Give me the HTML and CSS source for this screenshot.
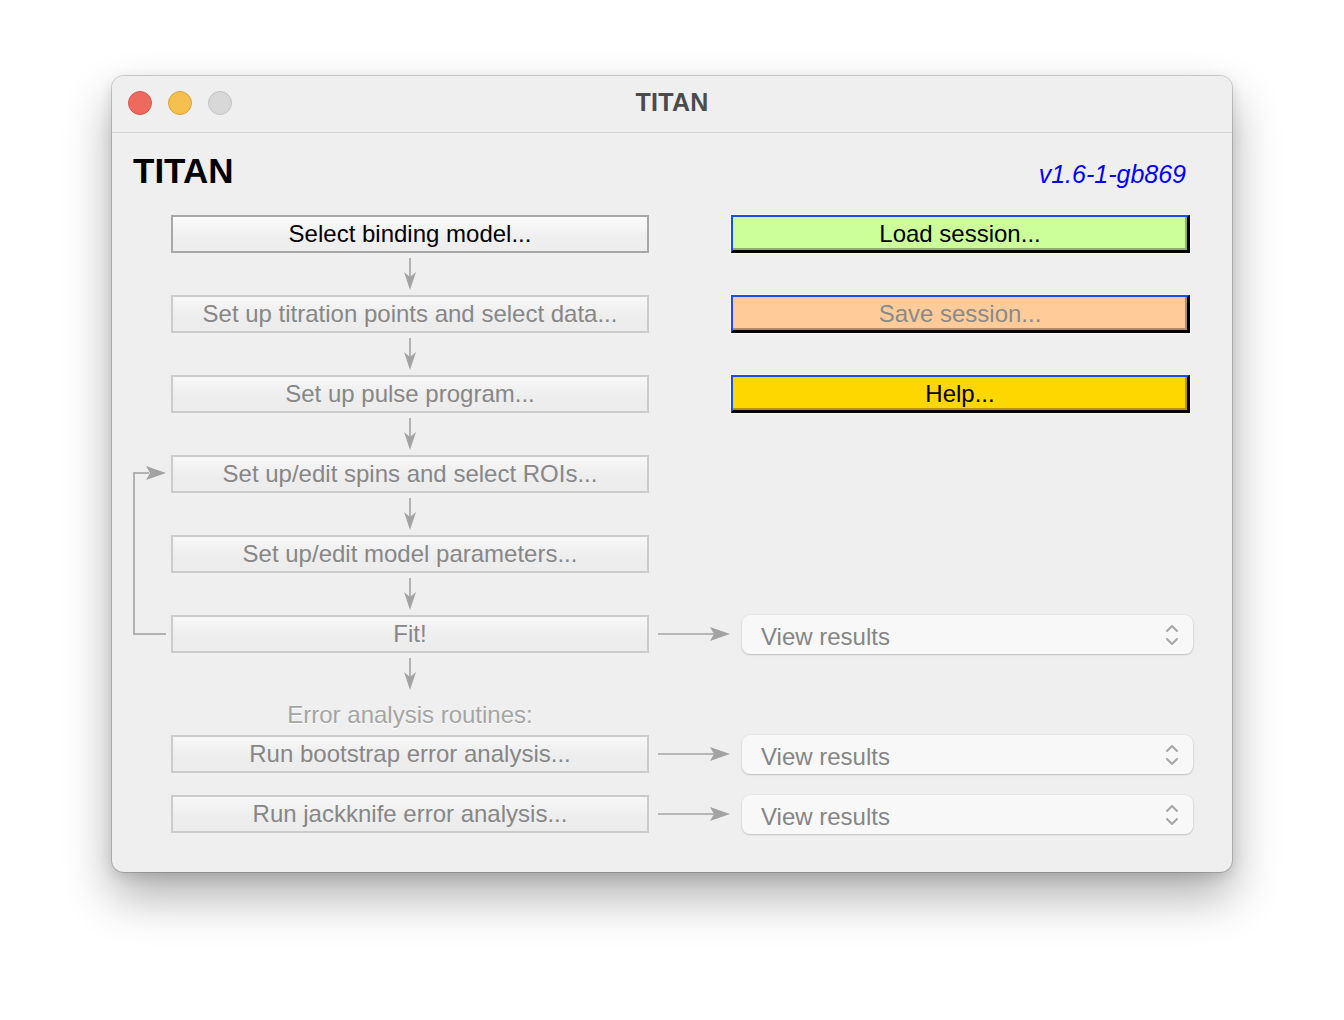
FILE: index.html
```html
<!DOCTYPE html>
<html lang="en">
<head>
<meta charset="utf-8">
<title>TITAN</title>
<link rel="stylesheet" href="styles.css">
</head>
<body>
<div class="window">
  <div class="titlebar">
    <div class="lights">
      <span class="light red"></span>
      <span class="light yellow"></span>
      <span class="light gray"></span>
    </div>
    <div class="title">TITAN</div>
    <div></div>
  </div>
  <div class="content">
    <div class="header">
      <h1 class="app-name">TITAN</h1>
      <span class="version">v1.6-1-gb869</span>
    </div>
    <div class="flow">
      <!-- row 1 -->
      <button class="btn active r1">Select binding model...</button>
      <button class="side-btn load r1">Load session...</button>
      <div class="varrow r2"><svg width="20" height="42" viewBox="0 0 20 42"><line x1="10" y1="5" x2="10" y2="30" class="ln"/><path d="M10 37 L4 19 L10 24 L16 19 Z" class="hd"/></svg></div>
      <!-- row 3 -->
      <button class="btn r3">Set up titration points and select data...</button>
      <button class="side-btn save r3">Save session...</button>
      <div class="varrow r4"><svg width="20" height="42" viewBox="0 0 20 42"><line x1="10" y1="5" x2="10" y2="30" class="ln"/><path d="M10 37 L4 19 L10 24 L16 19 Z" class="hd"/></svg></div>
      <!-- row 5 -->
      <button class="btn r5">Set up pulse program...</button>
      <button class="side-btn help r5">Help...</button>
      <div class="varrow r6"><svg width="20" height="42" viewBox="0 0 20 42"><line x1="10" y1="5" x2="10" y2="30" class="ln"/><path d="M10 37 L4 19 L10 24 L16 19 Z" class="hd"/></svg></div>
      <!-- loop -->
      <div class="loop">
        <svg class="loop-arrow" width="31" height="16" viewBox="0 0 31 16"><line x1="-2" y1="8" x2="14" y2="8" class="ln"/><path d="M31 8 L11 1 L15 8 L11 15 Z" class="hd"/></svg>
      </div>
      <!-- row 7 -->
      <button class="btn r7">Set up/edit spins and select ROIs...</button>
      <div class="varrow r8"><svg width="20" height="42" viewBox="0 0 20 42"><line x1="10" y1="5" x2="10" y2="30" class="ln"/><path d="M10 37 L4 19 L10 24 L16 19 Z" class="hd"/></svg></div>
      <!-- row 9 -->
      <button class="btn r9">Set up/edit model parameters...</button>
      <div class="varrow r10"><svg width="20" height="42" viewBox="0 0 20 42"><line x1="10" y1="5" x2="10" y2="30" class="ln"/><path d="M10 37 L4 19 L10 24 L16 19 Z" class="hd"/></svg></div>
      <!-- row 11 -->
      <button class="btn r11">Fit!</button>
      <div class="harrow r11"><svg width="93" height="20" viewBox="0 0 93 20"><line x1="9" y1="10" x2="66" y2="10" class="ln"/><path d="M81 10 L61 3 L65 10 L61 17 Z" class="hd"/></svg></div>
      <div class="select r11"><span>View results</span><svg class="chev" width="14" height="26" viewBox="0 0 14 26"><path d="M2 9 L7 4 L12 9" class="cv"/><path d="M2 17 L7 22 L12 17" class="cv"/></svg></div>
      <div class="varrow r12"><svg width="20" height="42" viewBox="0 0 20 42"><line x1="10" y1="5" x2="10" y2="30" class="ln"/><path d="M10 37 L4 19 L10 24 L16 19 Z" class="hd"/></svg></div>
      <!-- row 13 -->
      <div class="section-label r13">Error analysis routines:</div>
      <!-- row 14 -->
      <button class="btn r14">Run bootstrap error analysis...</button>
      <div class="harrow r14"><svg width="93" height="20" viewBox="0 0 93 20"><line x1="9" y1="10" x2="66" y2="10" class="ln"/><path d="M81 10 L61 3 L65 10 L61 17 Z" class="hd"/></svg></div>
      <div class="select r14"><span>View results</span><svg class="chev" width="14" height="26" viewBox="0 0 14 26"><path d="M2 9 L7 4 L12 9" class="cv"/><path d="M2 17 L7 22 L12 17" class="cv"/></svg></div>
      <!-- row 16 -->
      <button class="btn r16">Run jackknife error analysis...</button>
      <div class="harrow r16"><svg width="93" height="20" viewBox="0 0 93 20"><line x1="9" y1="10" x2="66" y2="10" class="ln"/><path d="M81 10 L61 3 L65 10 L61 17 Z" class="hd"/></svg></div>
      <div class="select r16"><span>View results</span><svg class="chev" width="14" height="26" viewBox="0 0 14 26"><path d="M2 9 L7 4 L12 9" class="cv"/><path d="M2 17 L7 22 L12 17" class="cv"/></svg></div>
    </div>
  </div>
</div>
</body>
</html>
```
FILE: styles.css
```css
html, body {
  margin: 0;
  padding: 0;
  background: #ffffff;
  font-family: "Liberation Sans", Arial, Helvetica, sans-serif;
}

body {
  width: 1344px;
  height: 1020px;
  overflow: hidden;
}

.window {
  margin: 76px 0 0 112px;
  width: 1120px;
  height: 796px;
  box-sizing: border-box;
  border-radius: 12px;
  background: #efefef;
  box-shadow: 0 0 0 1px rgba(0, 0, 0, 0.16), 0 24px 48px rgba(0, 0, 0, 0.32), 0 4px 14px rgba(0, 0, 0, 0.12);
  overflow: hidden;
  display: flex;
  flex-direction: column;
}

.titlebar {
  height: 57px;
  box-sizing: border-box;
  border-bottom: 1px solid #d2d2d2;
  background: #efefef;
  display: grid;
  grid-template-columns: 1fr auto 1fr;
  align-items: center;
}

.lights {
  display: flex;
  gap: 16px;
  padding-left: 16px;
  padding-bottom: 2px;
}

.light {
  width: 24px;
  height: 24px;
  box-sizing: border-box;
  border-radius: 50%;
  display: block;
}

.light.red { background: #ee6a5f; border: 1px solid #d5574c; }
.light.yellow { background: #f5c04f; border: 1px solid #d9a33e; }
.light.gray { background: #d8d8d8; border: 1px solid #c2c2c2; }

.title {
  font-size: 25px;
  font-weight: bold;
  color: #4b4b4b;
  padding-bottom: 3px;
  letter-spacing: 0.3px;
}

.content {
  padding: 18px 39px 0 21px;
}

.header {
  display: flex;
  justify-content: space-between;
  align-items: baseline;
  padding-right: 7px;
  height: 40px;
}

.app-name {
  margin: 0;
  font-size: 35px;
  line-height: 40px;
  font-weight: bold;
  color: #000;
}

.version {
  font-size: 25px;
  font-style: italic;
  color: #0000ff;
}

.flow {
  margin-top: 24px;
  display: grid;
  grid-template-columns: 38px 478px 93px 451px;
  grid-template-rows: 38px 42px 38px 42px 38px 42px 38px 42px 38px 42px 38px 42px 40px 38px 22px 38px;
}

.r1 { grid-row: 1; }
.r2 { grid-row: 2; }
.r3 { grid-row: 3; }
.r4 { grid-row: 4; }
.r5 { grid-row: 5; }
.r6 { grid-row: 6; }
.r7 { grid-row: 7; }
.r8 { grid-row: 8; }
.r9 { grid-row: 9; }
.r10 { grid-row: 10; }
.r11 { grid-row: 11; }
.r12 { grid-row: 12; }
.r13 { grid-row: 13; }
.r14 { grid-row: 14; }
.r16 { grid-row: 16; }

.btn {
  grid-column: 2;
  margin: 0;
  padding: 0;
  height: 38px;
  box-sizing: border-box;
  border: 2px solid #cbcbcb;
  border-radius: 0;
  background: linear-gradient(#f7f7f7, #ededed 60%, #ececec);
  color: #878787;
  font-family: "Liberation Sans", Arial, Helvetica, sans-serif;
  font-size: 24px;
  display: flex;
  align-items: center;
  justify-content: center;
  white-space: nowrap;
}

.btn.active {
  border-color: #a8a8a8;
  color: #000;
  background: linear-gradient(#fbfbfb, #efefef 60%, #ededed);
}

.side-btn {
  grid-column: 3 / 5;
  margin: 0 3px 0 82px;
  padding: 0;
  height: 38px;
  box-sizing: border-box;
  border-top: 2px solid #1a4fe6;
  border-left: 2px solid #1a4fe6;
  border-right: 3px solid #000;
  border-bottom: 3px solid #000;
  border-radius: 0;
  font-family: "Liberation Sans", Arial, Helvetica, sans-serif;
  font-size: 24px;
  color: #000;
  display: flex;
  align-items: center;
  justify-content: center;
  box-shadow: 0 0 0 1px rgba(255, 255, 255, 0.75);
}

.side-btn.load {
  background: #ccff99;
  box-shadow: inset -2px -2px 0 #8fae6a, 0 0 0 1px rgba(255, 255, 255, 0.75);
}

.side-btn.save {
  background: #ffcc99;
  color: #8a8a8a;
  box-shadow: inset -2px -2px 0 #b08d6a, 0 0 0 1px rgba(255, 255, 255, 0.75);
}

.side-btn.help {
  background: #ffd700;
  box-shadow: inset -2px -2px 0 #b39700, 0 0 0 1px rgba(255, 255, 255, 0.75);
}

.varrow {
  grid-column: 2;
  justify-self: center;
  display: flex;
}

.harrow {
  grid-column: 3;
  align-self: center;
  display: flex;
}

.ln {
  stroke: #a3a3a3;
  stroke-width: 1.6;
  fill: none;
}

.hd {
  fill: #a3a3a3;
  stroke: none;
}

.loop {
  grid-column: 1;
  grid-row: 7 / 12;
  margin: 18px 5px 18px 0;
  border-left: 2px solid #b2b2b2;
  border-bottom: 2px solid #b2b2b2;
  display: flex;
  flex-direction: column;
}

.loop-arrow {
  margin-top: -8px;
  overflow: visible;
}

.select {
  grid-column: 4;
  align-self: start;
  height: 39px;
  box-sizing: border-box;
  border-radius: 8px;
  background: #f8f8f8;
  box-shadow: 0 1px 2px rgba(0, 0, 0, 0.18), 0 0 0 0.5px rgba(0, 0, 0, 0.06);
  display: flex;
  align-items: center;
  justify-content: space-between;
  padding: 5px 14px 0 19px;
  font-size: 24px;
  color: #858585;
}

.chev {
  margin-top: -5px;
}

.cv {
  stroke: #a6a6a6;
  stroke-width: 2;
  fill: none;
  stroke-linecap: round;
  stroke-linejoin: round;
}

.section-label {
  grid-column: 2;
  justify-self: center;
  align-self: center;
  font-size: 24px;
  color: #a5a5a5;
  text-shadow: 0 1px 0 #ffffff;
}
```
